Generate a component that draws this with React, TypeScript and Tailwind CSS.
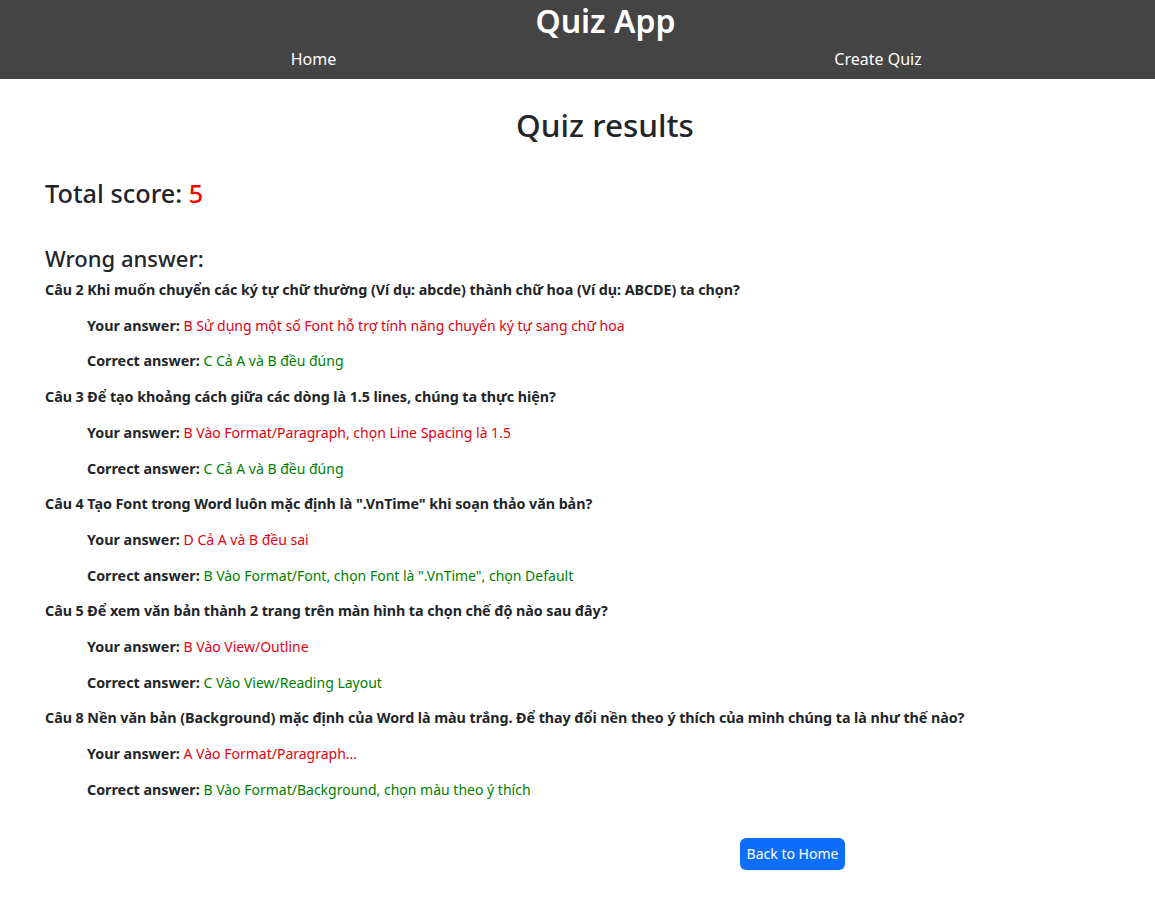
import React from "react";

const items = [
  {
    q: "Câu 2 Khi muốn chuyển các ký tự chữ thường (Ví dụ: abcde) thành chữ hoa (Ví dụ: ABCDE) ta chọn?",
    y: "B Sử dụng một số Font hỗ trợ tính năng chuyển ký tự sang chữ hoa",
    c: "C Cả A và B đều đúng",
  },
  {
    q: "Câu 3 Để tạo khoảng cách giữa các dòng là 1.5 lines, chúng ta thực hiện?",
    y: "B Vào Format/Paragraph, chọn Line Spacing là 1.5",
    c: "C Cả A và B đều đúng",
  },
  {
    q: 'Câu 4 Tạo Font trong Word luôn mặc định là ".VnTime" khi soạn thảo văn bản?',
    y: "D Cả A và B đều sai",
    c: 'B Vào Format/Font, chọn Font là ".VnTime", chọn Default',
  },
  {
    q: "Câu 5 Để xem văn bản thành 2 trang trên màn hình ta chọn chế độ nào sau đây?",
    y: "B Vào View/Outline",
    c: "C Vào View/Reading Layout",
  },
  {
    q: "Câu 8 Nền văn bản (Background) mặc định của Word là màu trắng. Để thay đổi nền theo ý thích của mình chúng ta là như thế nào?",
    y: "A Vào Format/Paragraph...",
    c: "B Vào Format/Background, chọn màu theo ý thích",
  },
];

export default function App() {
  return (
    <div
      className="min-h-[904px] bg-white text-[#212529]"
      style={{ fontFamily: '"Noto Sans", "Open Sans", sans-serif' }}
    >
      <header className="h-[79px] bg-[#444444] text-white">
        <div className="pl-[56px] pt-[1px] text-center text-[32px] font-semibold leading-[40px]">
          Quiz App
        </div>
        <nav className="flex pt-[6px] text-[16px] leading-[24px]">
          <div className="w-[627px] text-center">Home</div>
          <div className="w-[502px] text-center">Create Quiz</div>
        </nav>
      </header>

      <main className="px-[45px]">
        <h2 className="mt-[27px] pl-[55px] text-center text-[31.5px] font-medium leading-[38px]">
          Quiz results
        </h2>
        <h3 className="mt-[32px] text-[25.3px] font-medium leading-[34px]">
          Total score: <span className="text-[#ff0000]">5</span>
        </h3>
        <h4 className="mt-[34px] text-[22px] font-medium leading-[29px]">
          Wrong answer:
        </h4>
        <div className="mt-[-1px] text-[14.3px] leading-[35.7px]">
          {items.map((it, i) => (
            <div key={i}>
              <div className="font-bold tracking-[-0.05px]">{it.q}</div>
              <div className="pl-[42px]">
                <span className="font-bold">Your answer:</span>{" "}
                <span className="text-[14px] text-[#e60012]">{it.y}</span>
              </div>
              <div className="pl-[42px]">
                <span className="font-bold">Correct answer:</span>{" "}
                <span className="text-[14px] text-[#008000]">{it.c}</span>
              </div>
            </div>
          ))}
        </div>
        <div className="mt-[30px] flex pl-[695px]">
          <button className="h-[32px] w-[105px] rounded-[6px] bg-[#0d6efd] text-[14px] text-white">
            Back to Home
          </button>
        </div>
      </main>
    </div>
  );
}
